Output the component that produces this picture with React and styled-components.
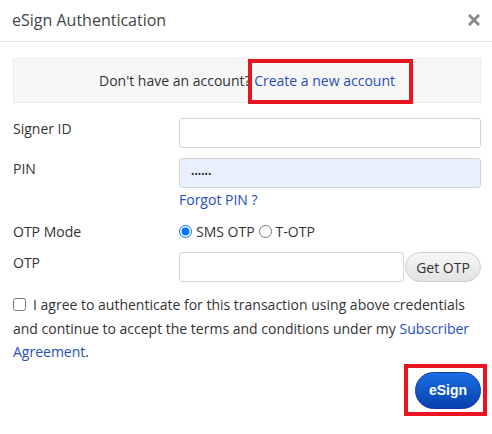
import React, { useState } from 'react';
import styled, { createGlobalStyle } from 'styled-components';

const GlobalStyle = createGlobalStyle`
  html, body {
    margin: 0;
    padding: 0;
    background: #ffffff;
  }
  body {
    font-family: "Open Sans", "Liberation Sans", sans-serif;
    color: #333333;
  }
  * {
    box-sizing: border-box;
  }
`;

const Modal = styled.div`
  width: 492px;
  height: 434px;
  background: #fff;
  display: flex;
  flex-direction: column;
`;

const Header = styled.div`
  height: 42px;
  display: flex;
  align-items: center;
  justify-content: space-between;
  padding: 0 12px 2px 12px;
  border-bottom: 1px solid #e3e3e3;
`;

const Title = styled.h4`
  margin: 0;
  font-size: 16px;
  font-weight: 400;
  color: #444;
`;

const CloseButton = styled.button`
  border: 0;
  background: none;
  padding: 0;
  display: flex;
  cursor: pointer;
`;

const Body = styled.div`
  padding: 16px 11px 0 13px;
  display: flex;
  flex-direction: column;
`;

const Banner = styled.div`
  height: 45px;
  background: #f7f7f7;
  border: 1px solid #ececec;
  display: flex;
  align-items: center;
  justify-content: center;
  font-size: 14px;
  color: #333;
  margin-bottom: 15px;
`;

const Marked = styled.span`
  position: relative;
  display: inline-block;

  &::after {
    content: '';
    position: absolute;
    left: ${({ $l }) => $l}px;
    right: ${({ $r }) => $r}px;
    top: ${({ $t }) => $t}px;
    bottom: ${({ $b }) => $b}px;
    border: 4px solid #e8141f;
    pointer-events: none;
  }
`;

const Link = styled.a`
  color: #1f4dbd;
  text-decoration: none;
  cursor: pointer;
`;

const Row = styled.div`
  display: grid;
  grid-template-columns: 166px 1fr;
  align-items: start;
  margin-bottom: ${({ $mb }) => $mb}px;
`;

const Label = styled.label`
  font-size: 14px;
  color: #333;
  padding-top: ${({ $pt }) => ($pt === undefined ? 3 : $pt)}px;
`;

const Field = styled.div`
  display: flex;
  flex-direction: column;
`;

const Input = styled.input`
  width: 100%;
  height: 30px;
  border: 1px solid #d4d4d4;
  border-radius: 3px;
  padding: 0 11px;
  font-family: inherit;
  font-size: 14px;
  color: #222;
  background: ${({ $filled }) => ($filled ? '#e8f0fe' : '#fff')};
  outline: none;

  &[type='password'] {
    font-size: 9px;
    letter-spacing: 0;
  }
`;

const HelpLink = styled(Link)`
  font-size: 14px;
  margin-top: 2px;
`;

const RadioGroup = styled.div`
  display: flex;
  align-items: center;
  font-size: 14px;
  color: #333;
`;

const Radio = styled.input`
  margin: 0 4px 0 0;
  width: 13px;
  height: 13px;
`;

const RadioText = styled.span`
  margin-right: 4px;
`;

const OtpGroup = styled.div`
  display: flex;
  align-items: center;
`;

const GetOtpButton = styled.button`
  flex: none;
  width: 76px;
  height: 30px;
  border: 1px solid #cfcfcf;
  border-radius: 15px;
  background: linear-gradient(#f6f6f6, #e2e2e2);
  font-family: inherit;
  font-size: 14px;
  color: #333;
  cursor: pointer;
  margin-left: 1px;
  padding: 0;
`;

const Consent = styled.div`
  font-size: 14px;
  line-height: 23.5px;
  color: #333;
  margin-top: 11px;
`;

const Check = styled.input`
  margin: 0 7px 0 0;
  width: 13px;
  height: 13px;
  vertical-align: -1px;
`;

const Footer = styled.div`
  display: flex;
  justify-content: flex-end;
  margin-top: 8px;
`;

const SignButton = styled.button`
  width: 66px;
  height: 37px;
  border: 1px solid #0b3aa3;
  border-radius: 19px;
  background: linear-gradient(#1a6fe2, #0840ad);
  color: #fff;
  font-family: "Liberation Sans", Arial, sans-serif;
  font-weight: 700;
  font-size: 14px;
  cursor: pointer;
`;

const CloseIcon = () => (
  <svg width="12" height="12" viewBox="0 0 12 12">
    <path d="M2 2 L10 10 M10 2 L2 10" stroke="#8c8c8c" strokeWidth="3" strokeLinecap="square" />
  </svg>
);

export default function App() {
  const [mode, setMode] = useState('sms');

  return (
    <>
      <GlobalStyle />
      <Modal>
        <Header>
          <Title>eSign Authentication</Title>
          <CloseButton aria-label="Close">
            <CloseIcon />
          </CloseButton>
        </Header>
        <Body>
          <Banner>
            Don't have an account?&nbsp;
            <Marked $l={-6} $r={-18} $t={-12} $b={-14}>
              <Link>Create a new account</Link>
            </Marked>
          </Banner>

          <Row $mb={10}>
            <Label $pt={1}>Signer ID</Label>
            <Input type="text" />
          </Row>

          <Row $mb={13}>
            <Label $pt={1}>PIN</Label>
            <Field>
              <Input type="password" defaultValue="123456" $filled />
              <HelpLink>Forgot PIN ?</HelpLink>
            </Field>
          </Row>

          <Row $mb={11}>
            <Label $pt={0}>OTP Mode</Label>
            <RadioGroup>
              <Radio
                type="radio"
                name="mode"
                checked={mode === 'sms'}
                onChange={() => setMode('sms')}
              />
              <RadioText>SMS OTP</RadioText>
              <Radio
                type="radio"
                name="mode"
                checked={mode === 'totp'}
                onChange={() => setMode('totp')}
              />
              <RadioText>T-OTP</RadioText>
            </RadioGroup>
          </Row>

          <Row $mb={0}>
            <Label $pt={1}>OTP</Label>
            <OtpGroup>
              <Input type="text" />
              <GetOtpButton>Get OTP</GetOtpButton>
            </OtpGroup>
          </Row>

          <Consent>
            <Check type="checkbox" />
            I agree to authenticate for this transaction using above credentials and continue
            to accept the terms and conditions under my <Link>Subscriber Agreement</Link>.
          </Consent>

          <Footer>
            <Marked $l={-11} $r={-6} $t={-8} $b={-7}>
              <SignButton>eSign</SignButton>
            </Marked>
          </Footer>
        </Body>
      </Modal>
    </>
  );
}
